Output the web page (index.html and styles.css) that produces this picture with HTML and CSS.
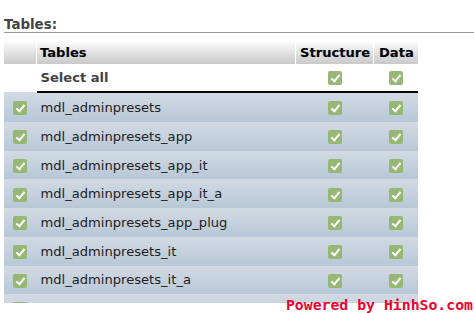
FILE: index.html
```html
<!DOCTYPE html>
<html lang="en">
<head>
    <meta charset="UTF-8">
    <meta name="viewport" content="width=device-width, initial-scale=1.0">
    <title>Export tables</title>
    <link rel="stylesheet" href="styles.css">
</head>
<body>
    <div class="page">
        <h2 class="section-title">Tables:</h2>
        <table class="tables">
            <thead>
                <tr>
                    <th class="col-check"></th>
                    <th class="col-name">Tables</th>
                    <th class="col-structure">Structure</th>
                    <th class="col-data">Data</th>
                </tr>
            </thead>
            <tbody>
                <tr class="select-all">
                    <td class="col-check"></td>
                    <td class="col-name">Select all</td>
                    <td class="col-box"><span class="cb"></span></td>
                    <td class="col-box"><span class="cb"></span></td>
                </tr>
                <tr class="row">
                    <td class="col-box"><span class="cb"></span></td>
                    <td>mdl_adminpresets</td>
                    <td class="col-box"><span class="cb"></span></td>
                    <td class="col-box"><span class="cb"></span></td>
                </tr>
                <tr class="row">
                    <td class="col-box"><span class="cb"></span></td>
                    <td>mdl_adminpresets_app</td>
                    <td class="col-box"><span class="cb"></span></td>
                    <td class="col-box"><span class="cb"></span></td>
                </tr>
                <tr class="row">
                    <td class="col-box"><span class="cb"></span></td>
                    <td>mdl_adminpresets_app_it</td>
                    <td class="col-box"><span class="cb"></span></td>
                    <td class="col-box"><span class="cb"></span></td>
                </tr>
                <tr class="row">
                    <td class="col-box"><span class="cb"></span></td>
                    <td>mdl_adminpresets_app_it_a</td>
                    <td class="col-box"><span class="cb"></span></td>
                    <td class="col-box"><span class="cb"></span></td>
                </tr>
                <tr class="row">
                    <td class="col-box"><span class="cb"></span></td>
                    <td>mdl_adminpresets_app_plug</td>
                    <td class="col-box"><span class="cb"></span></td>
                    <td class="col-box"><span class="cb"></span></td>
                </tr>
                <tr class="row">
                    <td class="col-box"><span class="cb"></span></td>
                    <td>mdl_adminpresets_it</td>
                    <td class="col-box"><span class="cb"></span></td>
                    <td class="col-box"><span class="cb"></span></td>
                </tr>
                <tr class="row">
                    <td class="col-box"><span class="cb"></span></td>
                    <td>mdl_adminpresets_it_a</td>
                    <td class="col-box"><span class="cb"></span></td>
                    <td class="col-box"><span class="cb"></span></td>
                </tr>
                <tr class="row">
                    <td class="col-box"><span class="cb"></span></td>
                    <td>mdl_adminpresets_plug</td>
                    <td class="col-box"><span class="cb"></span></td>
                    <td class="col-box"><span class="cb"></span></td>
                </tr>
            </tbody>
        </table>
    </div>
    <div class="watermark"><span class="watermark-text">Powered by HinhSo.com</span></div>
</body>
</html>
```

FILE: styles.css
```css
html, body {
    margin: 0;
    height: 100%;
    overflow: hidden;
}

body {
    font-family: "DejaVu Sans", Verdana, sans-serif;
    background-color: #fff;
    color: #333;
    position: relative;
}

.page {
    padding-left: 4px;
}

.section-title {
    font-size: 13.4px;
    font-weight: bold;
    color: #444;
    margin: 0;
    padding-top: 17px;
    line-height: 15px;
    border-bottom: 1px solid #9a9a9a;
}

.tables {
    margin-top: 9px;
    border-collapse: collapse;
    font-size: 13.1px;
}

.tables th {
    height: 21.7px;
    padding: 0 0 0 4px;
    text-align: left;
    font-weight: bold;
    color: #000;
    text-shadow: 0 0 1px rgba(120, 150, 200, 0.35);
    background: linear-gradient(#fafafa, #c9c9c9);
    border-right: 1px solid #fff;
}

.tables th.col-check {
    width: 32px;
    padding: 0;
}

.tables th.col-name {
    width: 255px;
    padding-left: 3px;
}

.tables th.col-structure {
    width: 73px;
}

.tables th.col-data {
    width: 39px;
    padding-left: 5px;
    border-right: none;
}

.tables td {
    height: 28.7px;
    padding: 0 0 0 4px;
    vertical-align: middle;
}

.tables td.col-box {
    padding: 0;
    text-align: center;
}

.select-all td {
    height: 27.7px;
    font-weight: bold;
    color: #444;
    border-bottom: 2px solid #000;
}

.select-all td.col-check {
    border-bottom: none;
}

.row td {
    background: linear-gradient(#d2dae3, #b8c7d7);
    color: #222;
}

.cb {
    display: inline-block;
    width: 14px;
    height: 14px;
    border-radius: 2px;
    background-color: #97b774;
    position: relative;
    vertical-align: middle;
}

.cb::after {
    content: "";
    position: absolute;
    left: 5px;
    top: 2px;
    width: 3px;
    height: 7px;
    border: solid #fff;
    border-width: 0 2px 2px 0;
    transform: rotate(40deg);
}

.watermark {
    position: absolute;
    left: 0;
    right: 0;
    bottom: 0;
    height: 10px;
    background-color: #fff;
}

.watermark-text {
    position: absolute;
    right: 1px;
    bottom: 0;
    font-family: "DejaVu Sans Mono", monospace;
    font-weight: bold;
    font-size: 14.8px;
    line-height: 17px;
    color: #f2002e;
    white-space: nowrap;
}
```
